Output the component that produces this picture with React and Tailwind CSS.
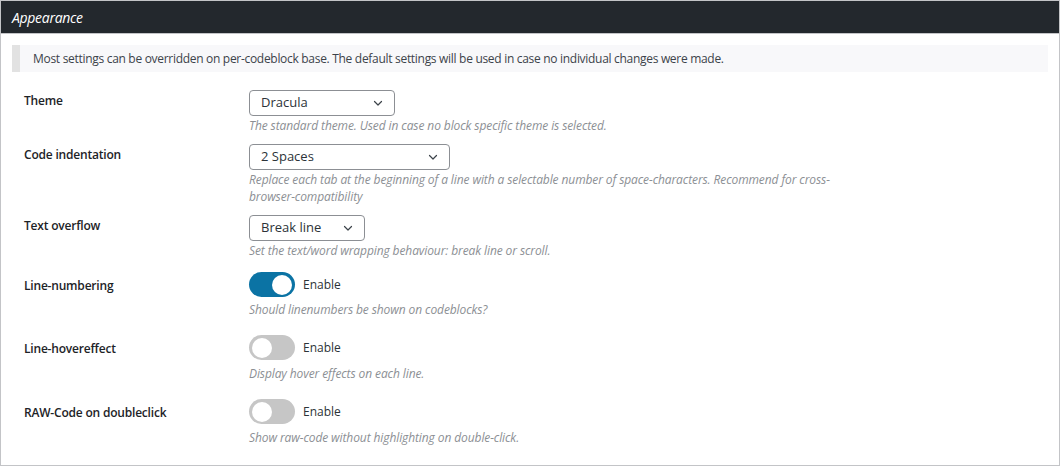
import React, { useState } from 'react';

const Chevron = () => (
  <svg width="12" height="12" viewBox="0 0 12 12" fill="none" className="shrink-0">
    <path d="M2.5 4.5L6 8l3.5-3.5" stroke="#3c434a" strokeWidth="1.2" strokeLinecap="round" strokeLinejoin="round" />
  </svg>
);

const Select = ({ value, width }) => (
  <div
    className={`${width} h-[26px] flex items-center justify-between pl-[11px] pr-[10px] border border-[#8c8f94] rounded-[4px] bg-white text-[13px] text-[#2c3338]`}
  >
    <span>{value}</span>
    <Chevron />
  </div>
);

const Toggle = ({ on }) => (
  <div
    className={`w-[46px] h-[25px] rounded-full flex items-center px-[3px] ${
      on ? 'bg-[#0b73a4] justify-end' : 'bg-[#c6c6c6] justify-start'
    }`}
  >
    <div className="w-[20px] h-[20px] rounded-full bg-white" />
  </div>
);

const Description = ({ children, mt = 'mt-px' }) => (
  <p className={`${mt} max-w-[606px] text-[12px] leading-[17px] italic tracking-[-0.1px] text-[#8c8f94]`}>
    {children}
  </p>
);

const Label = ({ children, pt }) => (
  <div className={`w-[225px] shrink-0 ${pt} text-[12px] leading-[18px] font-semibold tracking-[-0.2px] text-[#1d2327]`}>
    {children}
  </div>
);

const SelectRow = ({ label, value, width, description, pt }) => (
  <div className={`flex items-start ${pt}`}>
    <Label pt="pt-[2px]">{label}</Label>
    <div>
      <Select value={value} width={width} />
      <Description>{description}</Description>
    </div>
  </div>
);

const ToggleRow = ({ label, on, description, pt, mt }) => (
  <div className={`flex items-start ${pt}`}>
    <Label pt="pt-[5px]">{label}</Label>
    <div>
      <div className="flex items-center gap-[8px]">
        <Toggle on={on} />
        <span className="text-[12px] text-[#2c3338]">Enable</span>
      </div>
      <Description mt={mt}>{description}</Description>
    </div>
  </div>
);

export default function App() {
  const [settings] = useState({ numbering: true, hover: false, raw: false });

  return (
    <div
      className="w-[1060px] h-[466px] bg-white"
      style={{ fontFamily: '"Open Sans", "Noto Sans", Arial, sans-serif' }}
    >
      <div className="h-full border border-[#c3c4c7] flex flex-col">
        {/* Header */}
        <div className="h-[33px] bg-[#23282d] border-b border-[#c3c4c7] flex items-center px-[11px]">
          <h2 className="text-[14px] italic tracking-[-0.3px] text-white">Appearance</h2>
        </div>

        {/* Notice */}
        <div className="mx-[11px] mt-[11px] h-[27px] bg-[#f8f8fa] border-l-[8px] border-[#e2e2e2] flex items-center pl-[13px]">
          <p className="text-[12px] tracking-[-0.3px] text-[#3c434a]">
            Most settings can be overridden on per-codeblock base. The default settings will be used in case no
            individual changes were made.
          </p>
        </div>

        {/* Settings */}
        <div className="pl-[23px]">
          <SelectRow
            label="Theme"
            value="Dracula"
            width="w-[146px]"
            pt="pt-[18px]"
            description="The standard theme. Used in case no block specific theme is selected."
          />
          <SelectRow
            label="Code indentation"
            value="2 Spaces"
            width="w-[201px]"
            pt="pt-[10px]"
            description="Replace each tab at the beginning of a line with a selectable number of space-characters. Recommend for cross-browser-compatibility"
          />
          <SelectRow
            label="Text overflow"
            value="Break line"
            width="w-[116px]"
            pt="pt-[10px]"
            description="Set the text/word wrapping behaviour: break line or scroll."
          />
          <ToggleRow
            label="Line-numbering"
            on={settings.numbering}
            pt="pt-[13px]"
            mt="mt-[4px]"
            description="Should linenumbers be shown on codeblocks?"
          />
          <ToggleRow
            label="Line-hovereffect"
            on={settings.hover}
            pt="pt-[17px]"
            mt="mt-[5px]"
            description="Display hover effects on each line."
          />
          <ToggleRow
            label="RAW-Code on doubleclick"
            on={settings.raw}
            pt="pt-[17px]"
            mt="mt-[5px]"
            description="Show raw-code without highlighting on double-click."
          />
        </div>
      </div>
    </div>
  );
}
